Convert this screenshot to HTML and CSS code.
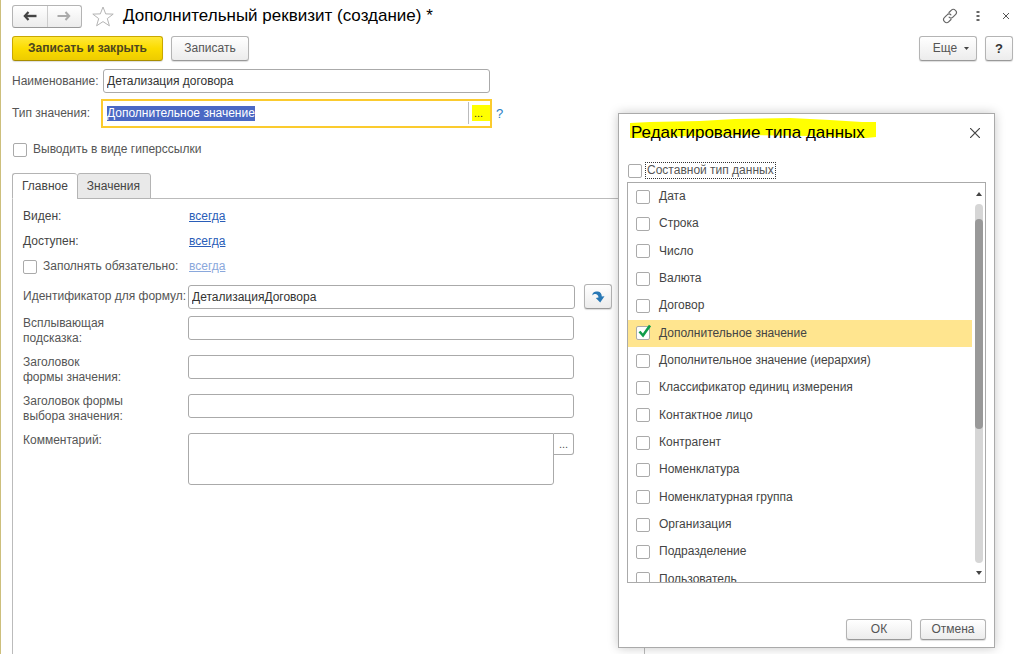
FILE: index.html
```html
<!DOCTYPE html>
<html lang="ru">
<head>
<meta charset="utf-8">
<title>Дополнительный реквизит (создание)</title>
<link rel="stylesheet" href="styles.css">
</head>
<body>
<main class="window">
  <header class="titlebar">
    <div class="nav">
      <button class="nav-btn" type="button" aria-label="Назад"><svg width="14" height="10" viewBox="0 0 14 10"><path d="M2 5H13.500" fill="none" stroke="#444" stroke-width="2.400"/><path d="M5.500 1 1.800 5l3.700 4" fill="none" stroke="#444" stroke-width="2.200"/></svg></button>
      <button class="nav-btn" type="button" aria-label="Вперед"><svg width="14" height="10" viewBox="0 0 14 10"><path d="M.5 5H12M8.500 1l3.700 4-3.700 4" fill="none" stroke="#aaa" stroke-width="2"/></svg></button>
    </div>
    <button class="plain star" type="button" aria-label="Избранное"><svg width="22" height="21" viewBox="0 0 22 21"><path d="M11 1l2.700 6.900 7.500.2-5.900 4.500 2.100 7.200L11 15.600l-6.400 4.200 2.100-7.200L.8 8.100l7.500-.2z" fill="#fff" stroke="#b4b4b4"/></svg></button>
    <h1 class="title">Дополнительный реквизит (создание) *</h1>
    <div class="window-tools">
      <button class="plain" type="button" aria-label="Ссылка"><svg width="16" height="16" viewBox="0 0 16 16"><g fill="none" stroke="#666" stroke-width="1.200" stroke-linecap="round"><path d="M7 4.500l2.400-2.400a2.600 2.600 0 0 1 3.800 0l.5.500a2.600 2.600 0 0 1 0 3.800l-2.800 2.800a2.600 2.600 0 0 1-3.800 0"/><path d="M9 11.500l-2.400 2.400a2.600 2.600 0 0 1-3.800 0l-.5-.5a2.600 2.600 0 0 1 0-3.800l2.800-2.800a2.600 2.600 0 0 1 3.800 0"/></g></svg></button>
      <button class="plain" type="button" aria-label="Меню"><svg width="4" height="12" viewBox="0 0 4 12"><path d="M.5 1h3v2h-3zM.5 5h3v2h-3zM.5 9h3v2h-3z" fill="#666"/></svg></button>
      <button class="plain" type="button" aria-label="Закрыть"><svg width="8" height="8" viewBox="0 0 8 8"><path d="M1 1l6 6M7 1 1 7" stroke="#555" fill="none"/></svg></button>
    </div>
  </header>

  <div class="commands">
    <button class="btn primary" type="button">Записать и закрыть</button>
    <button class="btn write" type="button">Записать</button>
    <span class="spacer"></span>
    <button class="btn more" type="button">Еще <svg width="5" height="3" viewBox="0 0 5 3"><path d="M0 0h5L2.500 3z" fill="#444"/></svg></button>
    <button class="btn help" type="button">?</button>
  </div>

  <div class="head-field">
    <label for="name">Наименование:</label>
    <input class="field" id="name" type="text" value="Детализация договора">
  </div>
  <div class="head-field type-row">
    <label for="type">Тип значения:</label>
    <div class="active-field">
      <input id="type" type="text" value="Дополнительное значение">
      <span class="choose-wrap"><button class="choose" type="button">...</button></span>
    </div>
    <a class="hint" href="#">?</a>
  </div>
  <label class="check hyper"><input type="checkbox"><span>Выводить в виде гиперссылки</span></label>

  <div class="tabs">
    <button class="tab current" type="button">Главное</button>
    <button class="tab" type="button">Значения</button>
  </div>
  <section class="panel">
    <div class="row"><span class="dark">Виден:</span><a href="#">всегда</a></div>
    <div class="row"><span class="dark">Доступен:</span><a href="#">всегда</a></div>
    <div class="row"><label class="check"><input type="checkbox"><span>Заполнять обязательно:</span></label><a class="off" href="#">всегда</a></div>
    <div class="row ident">
      <label for="ident">Идентификатор для формул:</label>
      <input class="field" id="ident" type="text" value="ДетализацияДоговора">
      <button class="btn refresh" type="button" aria-label="Обновить"><svg width="13" height="12" viewBox="0 0 13 12"><path d="M.5 4.500C0 1 3.500 0 6 .5 8.500 1 9.800 2.800 9.800 5.500L12.500 5.200 8.200 11.500 3.800 7 6.500 6.500C6.500 3 2.500 2 .5 4.500z" fill="#2878b5"/></svg></button>
    </div>
    <div class="row tall"><label for="tip">Всплывающая<br>подсказка:</label><input class="field" id="tip" type="text"></div>
    <div class="row tall"><label for="fcap">Заголовок<br>формы значения:</label><input class="field" id="fcap" type="text"></div>
    <div class="row tall"><label for="ccap">Заголовок формы<br>выбора значения:</label><input class="field" id="ccap" type="text"></div>
    <div class="row tall">
      <label for="note">Комментарий:</label>
      <div class="note"><textarea id="note"></textarea><button class="note-btn" type="button">...</button></div>
    </div>
  </section>
</main>

<div class="dialog" role="dialog" aria-labelledby="dlg-title">
  <div class="dialog-head">
    <h2 class="title marked" id="dlg-title"><svg class="marker" width="246" height="24" viewBox="0 0 246 24"><path d="M0 5 20 4 70 3 105 1 160 0 200 2 232 4H246V19L236 20 180 18 120 17 60 18 10 20H0z" fill="#ff0"/></svg><span>Редактирование типа данных</span></h2>
    <button class="plain" type="button" aria-label="Закрыть"><svg width="10" height="10" viewBox="0 0 10 10"><path d="M0 0l10 10M10 0 0 10" stroke="#444" stroke-width="1.200" fill="none"/></svg></button>
  </div>
  <label class="check compound"><input type="checkbox"><span>Составной тип данных</span></label>
  <div class="list">
    <div class="items">
      <label class="check item"><input type="checkbox"><span>Дата</span></label>
      <label class="check item"><input type="checkbox"><span>Строка</span></label>
      <label class="check item"><input type="checkbox"><span>Число</span></label>
      <label class="check item"><input type="checkbox"><span>Валюта</span></label>
      <label class="check item"><input type="checkbox"><span>Договор</span></label>
      <label class="check item picked"><input type="checkbox" checked><svg class="tick" width="15" height="14" viewBox="0 0 15 14"><path d="M2.500 7.500 6 11.500 13 1.500" fill="none" stroke="#0f9d4a" stroke-width="2.600"/></svg><span>Дополнительное значение</span></label>
      <label class="check item"><input type="checkbox"><span>Дополнительное значение (иерархия)</span></label>
      <label class="check item"><input type="checkbox"><span>Классификатор единиц измерения</span></label>
      <label class="check item"><input type="checkbox"><span>Контактное лицо</span></label>
      <label class="check item"><input type="checkbox"><span>Контрагент</span></label>
      <label class="check item"><input type="checkbox"><span>Номенклатура</span></label>
      <label class="check item"><input type="checkbox"><span>Номенклатурная группа</span></label>
      <label class="check item"><input type="checkbox"><span>Организация</span></label>
      <label class="check item"><input type="checkbox"><span>Подразделение</span></label>
      <label class="check item"><input type="checkbox"><span>Пользователь</span></label>
    </div>
    <div class="scroll">
      <svg width="6" height="4" viewBox="0 0 6 4"><path d="M0 4 3 0l3 4z" fill="#444"/></svg>
      <div class="track"><div class="thumb"></div></div>
      <svg width="6" height="4" viewBox="0 0 6 4"><path d="M0 0h6L3 4z" fill="#444"/></svg>
    </div>
  </div>
  <div class="actions">
    <button class="btn small" type="button">ОК</button>
    <button class="btn small" type="button">Отмена</button>
  </div>
</div>
<script src="script.js"></script>
</body>
</html>
```
FILE: styles.css
```css
* { box-sizing: border-box; }
body {
  margin: 0;
  background: #fff;
  color: #555;
  font: 12px/15px "Liberation Sans", Arial, sans-serif;
}
button, input, textarea { font: inherit; color: inherit; margin: 0; padding: 0; }
button { cursor: pointer; }
svg { display: block; flex: none; }
.window {
  display: flex;
  flex-direction: column;
  height: 100vh;
  padding: 4px 11px 0;
  border-left: 1px solid #cdbf7c;
  overflow: hidden;
}
.titlebar { display: flex; align-items: center; height: 24px; }
.nav {
  display: flex;
  width: 70px;
  height: 23px;
  border: 1px solid #b4b4b4;
  border-bottom-color: #999;
  border-radius: 3px;
  background: linear-gradient(#fff, #ececec);
}
.nav-btn { flex: 1; display: grid; place-items: center; border: 0; background: none; }
.nav-btn + .nav-btn { border-left: 1px solid #ccc; }
.plain { display: grid; place-items: center; border: 0; background: none; }
.star { margin: 0 9px 0 10px; }
.title { margin: 0; font-size: 17px; line-height: 22px; font-weight: 400; color: #000; }
.window-tools { display: flex; align-items: center; gap: 20px; margin: 0 3px 0 auto; }
.window-tools .plain:first-child { margin-right: -2px; }
.window-tools .plain:last-child { margin-left: 2px; }
.commands { display: flex; gap: 8px; margin-top: 8px; }
.spacer { flex: 1; }
.btn {
  display: flex;
  align-items: center;
  justify-content: center;
  height: 25px;
  padding: 0 12px;
  border: 1px solid #b4b4b4;
  border-bottom-color: #999;
  border-radius: 3px;
  background: linear-gradient(#fff, #ececec);
  box-shadow: 0 1px 1px #ddd;
}
.primary {
  min-width: 151px;
  font-weight: 700;
  color: #4d4620;
  border-color: #c9a800;
  border-bottom-color: #a88d00;
  background: linear-gradient(#ffe838, #fbdc00 50%, #edcc00);
}
.write { min-width: 78px; }
.more { gap: 7px; min-width: 58px; padding: 0 6px 0 12px; }
.help { width: 28px; padding: 0; font-size: 13px; font-weight: 700; color: #333; }
.head-field { display: flex; align-items: center; margin-top: 8px; }
.head-field label { width: 91px; white-space: nowrap; }
.field {
  width: 387px;
  height: 24px;
  padding: 0 3px;
  border: 1px solid #aaa;
  border-radius: 3px;
  background: #fff;
  color: #333;
}
.type-row { margin-top: 6px; }
.type-row label { width: 89px; }
.active-field {
  display: flex;
  width: 391px;
  height: 29px;
  border: 2px solid #fbcb2e;
}
.active-field input { flex: 1; min-width: 0; border: 0; outline: 0; padding: 0 4px; color: #333; }
.active-field input::selection { background: #4a68c4; color: #fff; }
.choose-wrap { display: flex; align-items: center; height: 22px; margin-top: 1px; padding-left: 3px; border-left: 1px solid #bbb; }
.choose { width: 18px; height: 16px; padding-right: 5px; border: 0; background: #ff0; color: #333; font-size: 11px; line-height: 16px; }
.hint { margin-left: 4px; color: #2a7dc4; text-decoration: none; font-size: 13px; }
.check { display: flex; align-items: center; gap: 6px; position: relative; }
.check input {
  appearance: none;
  flex: none;
  width: 14px;
  height: 14px;
  border: 1px solid #aaa;
  border-radius: 2px;
  background: #fff;
}
.hyper { margin: 14px 0 0 1px; }
.tabs { display: flex; margin-top: 16px; position: relative; z-index: 1; }
.tab {
  height: 26px;
  padding: 0 10px 0 9px;
  border: 1px solid #b4b4b4;
  border-radius: 3px 3px 0 0;
  background: #e9e9e9;
  color: #444;
}
.tab.current { padding-right: 9px; border-bottom-color: #fff; border-right: 0; background: #fff; }
.panel {
  flex: 1;
  display: flex;
  flex-direction: column;
  max-width: 633px;
  margin-top: -1px;
  padding: 5px 10px 0;
  border: 1px solid #bbb;
  border-bottom: 0;
}
.row { display: grid; grid-template-columns: 165px 387px auto; align-items: center; height: 25px; }
.row > label, .row > span { white-space: nowrap; }
.row a { color: #2a5db8; padding-left: 1px; }
.row a.off { color: #8aa8dc; }
.row .check { gap: 6px; }
.dark { color: #444; }
.ident { height: 24px; margin: 5px 0 8px; }
.refresh { width: 28px; padding: 0; margin-left: 9px; }
.tall { align-items: start; height: auto; min-height: 30px; margin-bottom: 9px; }
.tall .field { width: 386px; }
.note { display: flex; align-items: start; }
.note textarea {
  width: 366px;
  height: 52px;
  border: 1px solid #aaa;
  border-radius: 3px 0 3px 3px;
  resize: none;
}
.note-btn {
  width: 20px;
  height: 22px;
  border: 1px solid #aaa;
  border-left: 0;
  border-radius: 0 3px 3px 0;
  background: #fff;
  font-size: 11px;
}
.dialog {
  position: absolute;
  top: 113px;
  right: 29px;
  width: 377px;
  padding: 8px 8px 7px;
  border: 1px solid #aaa;
  background: #fff;
  box-shadow: 0 0 10px rgba(0, 0, 0, .22);
}
.dialog-head { display: flex; align-items: center; justify-content: space-between; padding: 0 6px 0 4px; }
.marked { position: relative; }
.marked span { position: relative; }
.marker { position: absolute; left: -1px; top: -4px; }
.compound { margin: 19px 0 4px 1px; gap: 4px; }
.compound span { outline: 1px dotted #333; padding: 0 1px; }
.list { display: flex; height: 401px; border: 1px solid #aaa; overflow: hidden; }
.items { flex: 1; display: grid; grid-template-rows: repeat(15, 1fr); height: 410px; }
.item { padding-left: 8px; gap: 9px; color: #444; }
.picked { background: #ffe58f; }
.tick { position: absolute; left: 9px; top: 4px; }
.scroll { display: flex; flex-direction: column; align-items: center; gap: 8px; width: 13px; padding: 9px 0 7px; }
.track { flex: 1; width: 8px; padding-top: 15px; border-radius: 4px; background: #d6d6d6; }
.thumb { height: 61%; border-radius: 4px; background: #999; }
.actions { display: flex; justify-content: flex-end; gap: 8px; margin-top: 36px; }
.small { width: 66px; height: 21px; padding: 0; }
```
FILE: script.js
```js
const typeField = document.getElementById("type");
typeField.focus();
typeField.select();
```
